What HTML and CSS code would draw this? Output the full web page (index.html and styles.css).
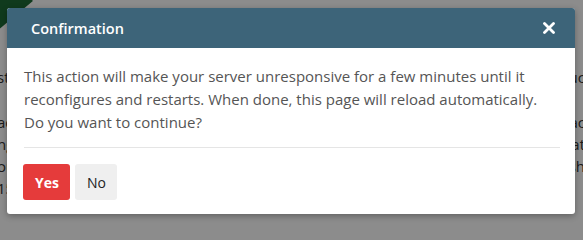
FILE: index.html
```html
<!DOCTYPE html>
<html>
<head>
<meta charset="utf-8">
<link rel="stylesheet" href="styles.css">
</head>
<body>
<div class="page">
  <div class="corner"></div>
  <div class="bg-lines">
    <p class="bg-row r1"><span>st</span><span>duc</span></p>
    <p class="bg-row r2"><span>ac</span><span>eac</span></p>
    <p class="bg-row r3"><span>ng</span><span>tat</span></p>
    <p class="bg-row r4"><span>ou</span><span>ish</span></p>
    <p class="bg-row r5"><span>15</span><span></span></p>
  </div>
</div>
<div class="overlay"></div>
<div class="modal">
  <div class="modal-header">
    <h2 class="modal-title">Confirmation</h2>
    <svg class="close" width="12" height="12" viewBox="0 0 12 12" aria-label="Close"><path d="M1.5 1.5 L10.5 10.5 M10.5 1.5 L1.5 10.5" stroke="#fff" stroke-width="2.8" stroke-linecap="round"/></svg>
  </div>
  <div class="modal-body">
    <p>This action will make your server unresponsive for a few minutes until it reconfigures and restarts. When done, this page will reload automatically. Do you want to continue?</p>
  </div>
  <div class="modal-footer">
    <button class="btn btn-yes">Yes</button>
    <button class="btn btn-no">No</button>
  </div>
</div>
</body>
</html>
```
FILE: styles.css
```css
html, body {
  margin: 0;
  padding: 0;
  width: 583px;
  height: 221px;
  overflow: hidden;
  font-family: "Open Sans", "Liberation Sans", sans-serif;
}
.page {
  position: relative;
  width: 583px;
  height: 221px;
  background: #fff;
}
.corner {
  position: absolute;
  left: -12px;
  top: -20px;
  width: 22px;
  height: 70px;
  background: #1e6b35;
  transform: rotate(50deg);
}
.bg-lines {
  padding-top: 66px;
}
.bg-row {
  margin: 0;
  display: flex;
  justify-content: space-between;
  font-size: 15px;
  line-height: 22px;
  color: #333;
  margin-left: -3px;
  margin-right: -2px;
}
.r1 { margin-bottom: 23px; }
.overlay {
  position: absolute;
  inset: 0;
  background: rgba(0,0,0,0.45);
}
.modal {
  position: absolute;
  left: 7px;
  top: 8px;
  width: 568px;
  height: 206px;
  background: #fff;
  border-radius: 3px;
  box-shadow: 0 2px 6px rgba(0,0,0,0.3);
  overflow: hidden;
}
.modal-header {
  background: #3d6479;
  height: 40px;
  display: flex;
  align-items: center;
  justify-content: space-between;
  padding: 0 20px 0 24px;
}
.modal-title {
  margin: 0;
  color: #fff;
  font-size: 14.5px;
  font-weight: 600;
}
.close {
  display: block;
  margin-top: -1px;
}
.modal-body {
  padding: 17px 15px 0 15px;
}
.modal-body p {
  margin: 0 0 0 2px;
  padding-bottom: 13px;
  border-bottom: 1px solid #e5e5e5;
  font-size: 15px;
  line-height: 23px;
  color: #555;
  width: 536px;
}
.modal-footer {
  padding: 16px 16px 15px 16px;
  display: flex;
  gap: 5px;
}
.btn {
  border: none;
  border-radius: 3px;
  height: 36px;
  font-family: "Open Sans", "Liberation Sans", sans-serif;
  font-size: 14px;
  padding: 0 12px;
}
.btn-yes {
  background: #e53b3b;
  color: #fff;
  font-weight: 700;
  width: 47px;
}
.btn-no {
  background: #efefef;
  color: #222;
  font-weight: 500;
  width: 42px;
}
```
